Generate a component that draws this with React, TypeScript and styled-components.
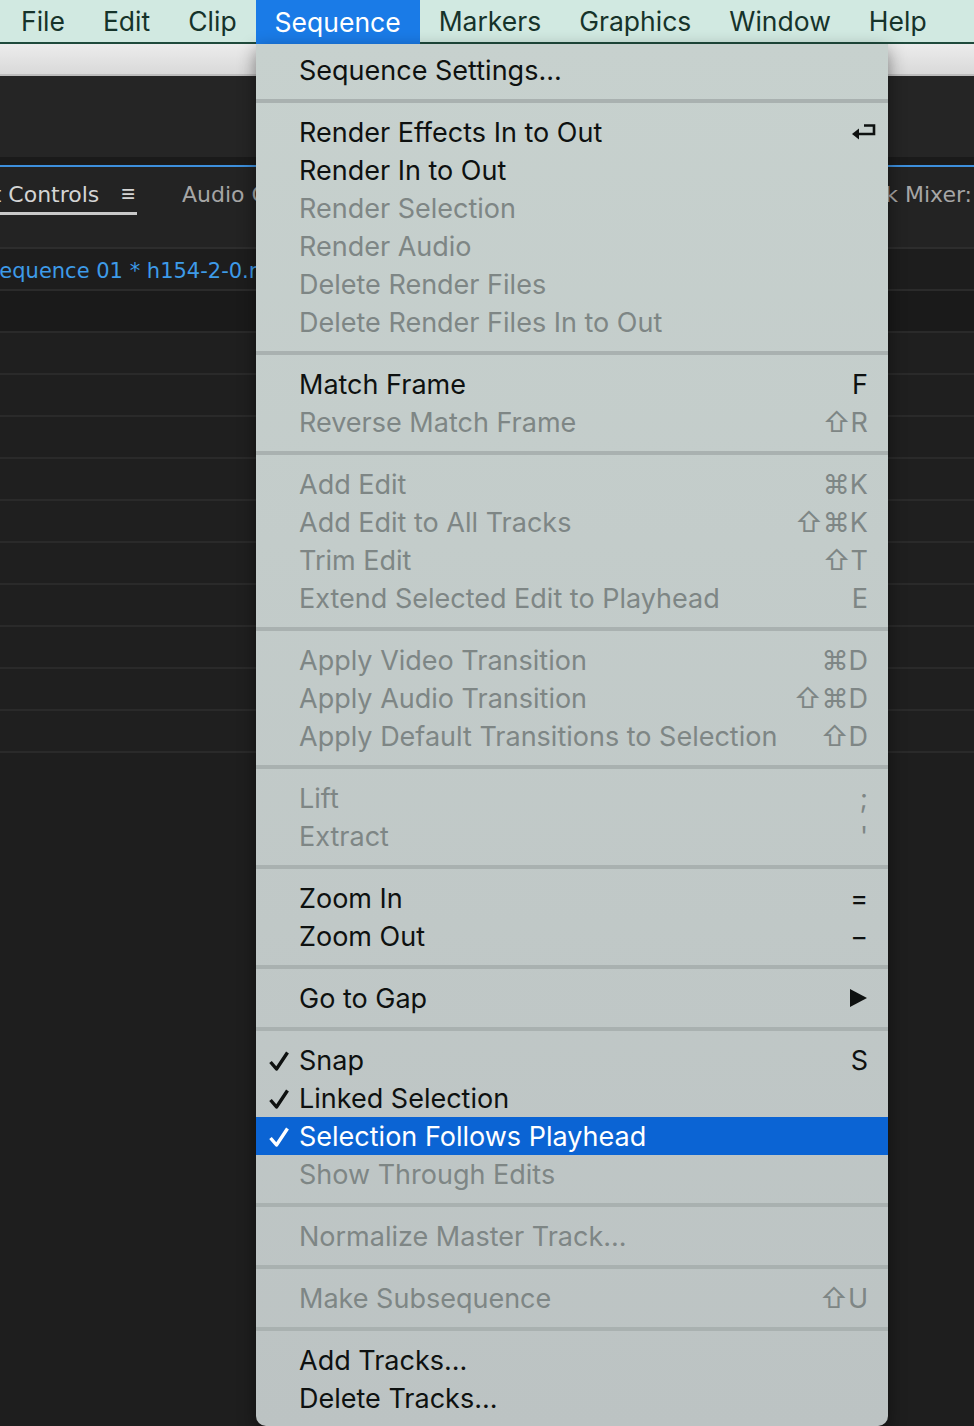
import React from 'react'
import styled, { createGlobalStyle } from 'styled-components'

const GlobalStyle = createGlobalStyle`
  html, body {
    margin: 0;
    padding: 0;
    background: #232323;
  }
  body {
    font-family: Inter, "Liberation Sans", sans-serif;
  }
`;

const Screen = styled.div`
  position: relative;
  width: 974px;
  height: 1426px;
  overflow: hidden;
  background: #1e1e1e;
`;

const MenuBar = styled.nav`
  display: flex;
  height: 44px;
  padding-left: 2px;
  background: #d1e9e1;
  border-bottom: 2px solid #1f4a3c;
  box-sizing: border-box;
`;

const MenuBarItem = styled.div<{ $active?: boolean }>`
  display: flex;
  align-items: center;
  padding: 0 19px;
  font-size: 26.5px;
  color: ${({ $active }) => ($active ? '#ffffff' : '#16332a')};
  background: ${({ $active }) => ($active ? '#1a7be7' : 'transparent')};
  margin-bottom: ${({ $active }) => ($active ? '-2px' : '0')};
`;

const TitleBar = styled.div`
  height: 32px;
  background: linear-gradient(#ececec, #d9d9d9);
  border-bottom: 2px solid #bdbdbd;
  box-sizing: border-box;
`;

const Toolbar = styled.div`
  height: 81px;
  background: #252525;
`;

const Strip = styled.div`
  height: 8px;
  background: #1a1a1a;
  border-bottom: 2px solid #3d8fdc;
`;

const TabRow = styled.div`
  display: flex;
  align-items: flex-start;
  height: 82px;
  padding-top: 9px;
  box-sizing: border-box;
  background: #232323;
  border-bottom: 2px solid #2d2d2d;
  font-family: "DejaVu Sans", sans-serif;
  font-size: 22px;
  overflow: hidden;
  white-space: nowrap;
`;

const Tab = styled.div<{ $active?: boolean }>`
  display: flex;
  align-items: center;
  gap: 22px;
  height: 36px;
  color: ${({ $active }) => ($active ? '#d4d4d4' : '#a6a6a6')};
  border-bottom: 3px solid ${({ $active }) => ($active ? '#c9c9c9' : 'transparent')};
`;

const FirstTab = styled(Tab)`
  margin-left: -62px;
  width: 199px;
`;

const MiddleTab = styled(Tab)`
  margin-left: 45px;
`;

const LastTab = styled(Tab)`
  margin-left: auto;
  padding-right: 2px;
`;

const MenuGlyph = styled.span`
  font-size: 24px;
  font-weight: 300;
`;

const SeqRow = styled.div`
  height: 40px;
  display: flex;
  align-items: center;
  background: #1d1d1d;
  border-bottom: 2px solid #2b2b2b;
  color: #3e9be8;
  font-family: "DejaVu Sans", sans-serif;
  font-size: 21px;
  white-space: nowrap;
  overflow: hidden;
`;

const SeqText = styled.span`
  margin-left: -14px;
  padding-top: 3px;
`;

const TrackHead = styled.div`
  height: 40px;
  background: #1a1a1a;
`;

const TrackRow = styled.div`
  height: 40px;
  background: #1f1f1f;
  border-top: 2px solid #2a2a2a;
`;

const TrackEnd = styled.div`
  border-top: 2px solid #2a2a2a;
`;

const Menu = styled.div`
  position: absolute;
  left: 256px;
  top: 44px;
  width: 632px;
  height: 1382px;
  background: linear-gradient(#c7d1ce, #bcc3c3);
  border-radius: 0 0 10px 10px;
  box-shadow: 0 6px 18px rgba(0, 0, 0, 0.45);
  padding-top: 7px;
  box-sizing: border-box;
`;

const Group = styled.div<{ $first?: boolean }>`
  padding: ${({ $first }) => ($first ? '0 0 10px' : '10px 0')};
  & + & {
    border-top: 4px solid #a9b1b0;
  }
`;

const Item = styled.div<{ $disabled?: boolean; $selected?: boolean }>`
  position: relative;
  display: flex;
  align-items: center;
  justify-content: space-between;
  height: 38px;
  padding: 0 20px 0 43px;
  font-size: 27px;
  color: ${({ $disabled, $selected }) =>
    $selected ? '#ffffff' : $disabled ? '#7e8685' : '#0e1110'};
  background: ${({ $selected }) => ($selected ? '#0b64d4' : 'transparent')};
`;

const Check = styled.svg`
  position: absolute;
  left: 12px;
  top: 9px;
`;

const Shortcut = styled.span<{ $overhang?: boolean }>`
  font-family: Inter, "DejaVu Sans", sans-serif;
  display: flex;
  align-items: center;
  margin-right: ${({ $overhang }) => ($overhang ? '-9px' : '0')};
`;

const ReturnIcon = () => (
  <svg width="27" height="20" viewBox="0 0 27 20">
    <path d="M14 3.5 H24 V12 H8" fill="none" stroke="#0e1110" strokeWidth="2.6" />
    <path d="M2 12 L9 6.5 V17.5 Z" fill="#0e1110" />
  </svg>
);

const SubArrow = () => (
  <svg width="19" height="20" viewBox="0 0 19 20">
    <path d="M1 1 L18 10 L1 19 Z" fill="#0e1110" />
  </svg>
);

const CheckMark = ({ color }: { color: string }) => (
  <Check width="22" height="22" viewBox="0 0 22 22">
    <path d="M2.5 12 L8.5 19 L19.5 2.5" fill="none" stroke={color} strokeWidth="3.4" strokeLinejoin="round" />
  </Check>
);

type Entry = {
  label: string;
  shortcut?: React.ReactNode;
  overhang?: boolean;
  disabled?: boolean;
  checked?: boolean;
  selected?: boolean;
};

const groups: Entry[][] = [
  [{ label: 'Sequence Settings...' }],
  [
    { label: 'Render Effects In to Out', shortcut: <ReturnIcon />, overhang: true },
    { label: 'Render In to Out' },
    { label: 'Render Selection', disabled: true },
    { label: 'Render Audio', disabled: true },
    { label: 'Delete Render Files', disabled: true },
    { label: 'Delete Render Files In to Out', disabled: true },
  ],
  [
    { label: 'Match Frame', shortcut: 'F' },
    { label: 'Reverse Match Frame', shortcut: '⇧R', disabled: true },
  ],
  [
    { label: 'Add Edit', shortcut: '⌘K', disabled: true },
    { label: 'Add Edit to All Tracks', shortcut: '⇧⌘K', disabled: true },
    { label: 'Trim Edit', shortcut: '⇧T', disabled: true },
    { label: 'Extend Selected Edit to Playhead', shortcut: 'E', disabled: true },
  ],
  [
    { label: 'Apply Video Transition', shortcut: '⌘D', disabled: true },
    { label: 'Apply Audio Transition', shortcut: '⇧⌘D', disabled: true },
    { label: 'Apply Default Transitions to Selection', shortcut: '⇧D', disabled: true },
  ],
  [
    { label: 'Lift', shortcut: '; ', disabled: true },
    { label: 'Extract', shortcut: "' ", disabled: true },
  ],
  [
    { label: 'Zoom In', shortcut: '=' },
    { label: 'Zoom Out', shortcut: '−' },
  ],
  [{ label: 'Go to Gap', shortcut: <SubArrow /> }],
  [
    { label: 'Snap', shortcut: 'S', checked: true },
    { label: 'Linked Selection', checked: true },
    { label: 'Selection Follows Playhead', checked: true, selected: true },
    { label: 'Show Through Edits', disabled: true },
  ],
  [{ label: 'Normalize Master Track...', disabled: true }],
  [{ label: 'Make Subsequence', shortcut: '⇧U', disabled: true }],
  [{ label: 'Add Tracks...' }, { label: 'Delete Tracks...' }],
];

const menuTitles = ['File', 'Edit', 'Clip', 'Sequence', 'Markers', 'Graphics', 'Window', 'Help'];

const App = () => {
  return (
    <Screen>
      <GlobalStyle />
      <MenuBar>
        {menuTitles.map((title) => (
          <MenuBarItem key={title} $active={title === 'Sequence'}>{title}</MenuBarItem>
        ))}
      </MenuBar>
      <TitleBar />
      <Toolbar />
      <Strip />
      <TabRow>
        <FirstTab $active>
          <span>Effect Controls</span>
          <MenuGlyph>≡</MenuGlyph>
        </FirstTab>
        <MiddleTab>Audio Clip Mixer: Sequence 01</MiddleTab>
        <LastTab>Audio Track Mixer:</LastTab>
      </TabRow>
      <SeqRow>
        <SeqText>Sequence 01 * h154-2-0.mp4</SeqText>
      </SeqRow>
      <TrackHead />
      {Array.from({ length: 10 }).map((_, i) => (
        <TrackRow key={i} />
      ))}
      <TrackEnd />

      <Menu>
        {groups.map((group, gi) => (
          <Group key={gi} $first={gi === 0}>
            {group.map((entry) => (
              <Item key={entry.label} $disabled={entry.disabled} $selected={entry.selected}>
                {entry.checked && <CheckMark color={entry.selected ? '#ffffff' : '#0e1110'} />}
                <span>{entry.label}</span>
                {entry.shortcut && <Shortcut $overhang={entry.overhang}>{entry.shortcut}</Shortcut>}
              </Item>
            ))}
          </Group>
        ))}
      </Menu>
    </Screen>
  )
}

export default App
